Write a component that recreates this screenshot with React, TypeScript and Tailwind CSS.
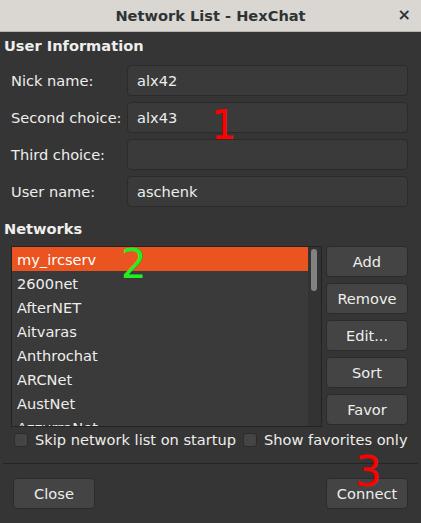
import React from "react";

const userFields = [
  { label: "Nick name:", value: "alx42" },
  { label: "Second choice:", value: "alx43" },
  { label: "Third choice:", value: "" },
  { label: "User name:", value: "aschenk" },
];

const networks = [
  "my_ircserv",
  "2600net",
  "AfterNET",
  "Aitvaras",
  "Anthrochat",
  "ARCNet",
  "AustNet",
  "AzzurraNet",
];

const sideButtons = ["Add", "Remove", "Edit...", "Sort", "Favor"];

const Button: React.FC<{ label: string; className?: string }> = ({ label, className }) => (
  <button
    className={
      "h-[31px] w-[82px] rounded-[4px] border border-[#2b2b2b] bg-[#444444] text-[14.6px] text-[#eeeeec] " +
      (className || "")
    }
  >
    {label}
  </button>
);

const Checkbox: React.FC<{ label: string }> = ({ label }) => (
  <label className="flex items-center gap-[7px]">
    <span className="h-[14px] w-[14px] rounded-[3px] border border-[#2b2b2b] bg-[#444444]" />
    <span>{label}</span>
  </label>
);

const App: React.FC = () => {
  return (
    <div
      className="flex h-[523px] w-[421px] flex-col overflow-hidden bg-[#353535] text-[14.6px] leading-[17px] text-[#eeeeec]"
      style={{ fontFamily: '"DejaVu Sans", sans-serif' }}
    >
      {/* title bar */}
      <div className="relative flex h-[32px] shrink-0 items-center justify-center border-b border-[#b8b4ae] bg-[#dad6d2] text-[#2e3436]">
        <span className="font-bold">Network List - HexChat</span>
        <span className="absolute right-[10px] top-[6px] text-[16px] font-bold">×</span>
      </div>

      <div className="relative flex flex-1 flex-col px-[4px]">
        <div className="mt-[5px] font-bold">User Information</div>

        <div className="mt-[11px] flex flex-col gap-[6px] pl-[7px] pr-[9px]">
          {userFields.map((f) => (
            <div key={f.label} className="flex items-center">
              <span className="w-[116px]">{f.label}</span>
              <div className="flex h-[31px] flex-1 items-center rounded-[4px] border border-[#2b2b2b] bg-[#3a3a3a] pl-[9px]">
                {f.value}
              </div>
            </div>
          ))}
        </div>

        <div className="mt-[13px] font-bold">Networks</div>

        <div className="mt-[9px] flex gap-[4px] pl-[7px] pr-[9px]">
          <div className="relative h-[181px] w-[311px] overflow-hidden border border-[#232323] bg-[#3a3a3a]">
            <ul className="mr-[13px]">
              {networks.map((n, i) => (
                <li
                  key={n}
                  className={
                    "flex h-[24px] items-center pl-[5px] " + (i === 0 ? "bg-[#e95420] text-white" : "")
                  }
                >
                  {n}
                </li>
              ))}
            </ul>
            <div className="absolute right-0 top-0 h-full w-[13px] bg-[#333333]">
              <div className="ml-[3px] mt-[2px] h-[42px] w-[6px] rounded-full bg-[#828282]" />
            </div>
          </div>
          <div className="flex flex-col gap-[6px]">
            {sideButtons.map((b) => (
              <Button key={b} label={b} />
            ))}
          </div>
        </div>

        <div className="mt-[4px] flex items-center gap-[7px] pl-[10px]">
          <Checkbox label="Skip network list on startup" />
          <Checkbox label="Show favorites only" />
        </div>

        <div className="mx-[-1px] mt-[15px] h-px bg-[#252525]" />

        <div className="mt-[14px] flex justify-between pl-[9px] pr-[9px]">
          <Button label="Close" />
          <Button label="Connect" />
        </div>

        {/* annotations */}
        <span className="absolute left-[211px] top-[73px] text-[40px] leading-none text-[#ff0000]">1</span>
        <span className="absolute left-[121px] top-[212px] text-[40px] leading-none text-[#22ee22]">2</span>
        <span className="absolute left-[355px] top-[419px] text-[42px] leading-none text-[#ff0000]">3</span>
      </div>
    </div>
  );
};

export default App;
